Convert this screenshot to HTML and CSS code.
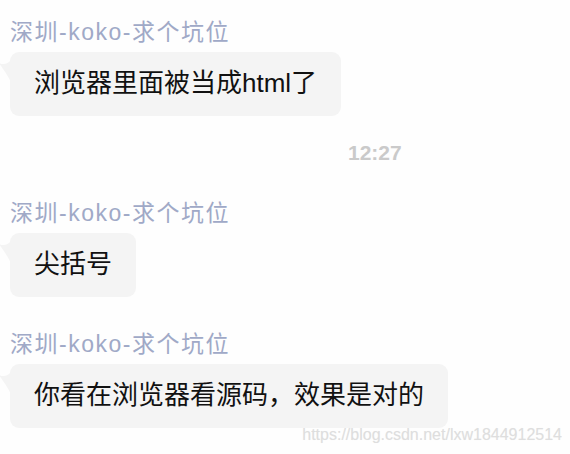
FILE: index.html
```html
<!DOCTYPE html>
<html lang="zh-CN">
<head>
  <meta charset="UTF-8">
  <meta name="viewport" content="width=device-width, initial-scale=1.0">
  <title>聊天记录</title>
  <link rel="stylesheet" href="styles.css">
</head>
<body>

  <!-- Chat history -->
  <div class="chat">
    <div class="msg">
      <div class="name">深圳-koko-求个坑位</div>
      <div class="bubble">
        <svg class="tail" width="12" height="22" viewBox="0 0 12 22"><path d="M0 3 C4 5 9 4 12 0 L12 22 C8 14 4 9 0 3 Z" fill="#f4f4f4"/></svg>
        浏览器里面被当成html了
      </div>
    </div>

    <div class="time">12:27</div>

    <div class="msg">
      <div class="name">深圳-koko-求个坑位</div>
      <div class="bubble">
        <svg class="tail" width="12" height="22" viewBox="0 0 12 22"><path d="M0 3 C4 5 9 4 12 0 L12 22 C8 14 4 9 0 3 Z" fill="#f4f4f4"/></svg>
        尖括号
      </div>
    </div>

    <div class="msg">
      <div class="name">深圳-koko-求个坑位</div>
      <div class="bubble">
        <svg class="tail" width="12" height="22" viewBox="0 0 12 22"><path d="M0 3 C4 5 9 4 12 0 L12 22 C8 14 4 9 0 3 Z" fill="#f4f4f4"/></svg>
        你看在浏览器看源码，效果是对的
      </div>
    </div>
  </div>

  <!-- Watermark over the screenshot -->
  <div class="watermark">https://blog.csdn.net/lxw1844912514</div>

</body>
</html>
```

FILE: styles.css
```css
/* Basic styling */
body {
  margin: 0;
  background-color: #fefefe;
  font-family: "Liberation Sans", "Noto Sans CJK SC", sans-serif;
  color: #111111;
  overflow: hidden;
}
.chat {
  display: flex;
  flex-direction: column;
  align-items: flex-start;
  padding: 17px 0 0 10px;
}

/* Messages */
.msg {
  display: flex;
  flex-direction: column;
  align-items: flex-start;
}
.msg + .msg {
  margin-top: 32px;
}
.time + .msg {
  margin-top: 30px;
}
.name {
  font-size: 23px;
  line-height: 30px;
  letter-spacing: 1.5px;
  color: #a0a9c7;
  margin-bottom: 5px;
}
.bubble {
  position: relative;
  background-color: #f4f4f4;
  border-radius: 9px;
  font-size: 26px;
  line-height: 36px;
  padding: 13px 24px 15px 24px;
}
.tail {
  position: absolute;
  left: -11px;
  top: 8px;
}

/* Timestamp */
.time {
  margin-top: 22px;
  padding-left: 338px;
  font-size: 21px;
  line-height: 30px;
  font-weight: bold;
  color: #cacaca;
}

/* Watermark */
.watermark {
  position: absolute;
  right: 8px;
  bottom: 10px;
  font-size: 16px;
  color: #dedede;
  text-shadow: 0 0 1px #f2f2f2;
}
```
